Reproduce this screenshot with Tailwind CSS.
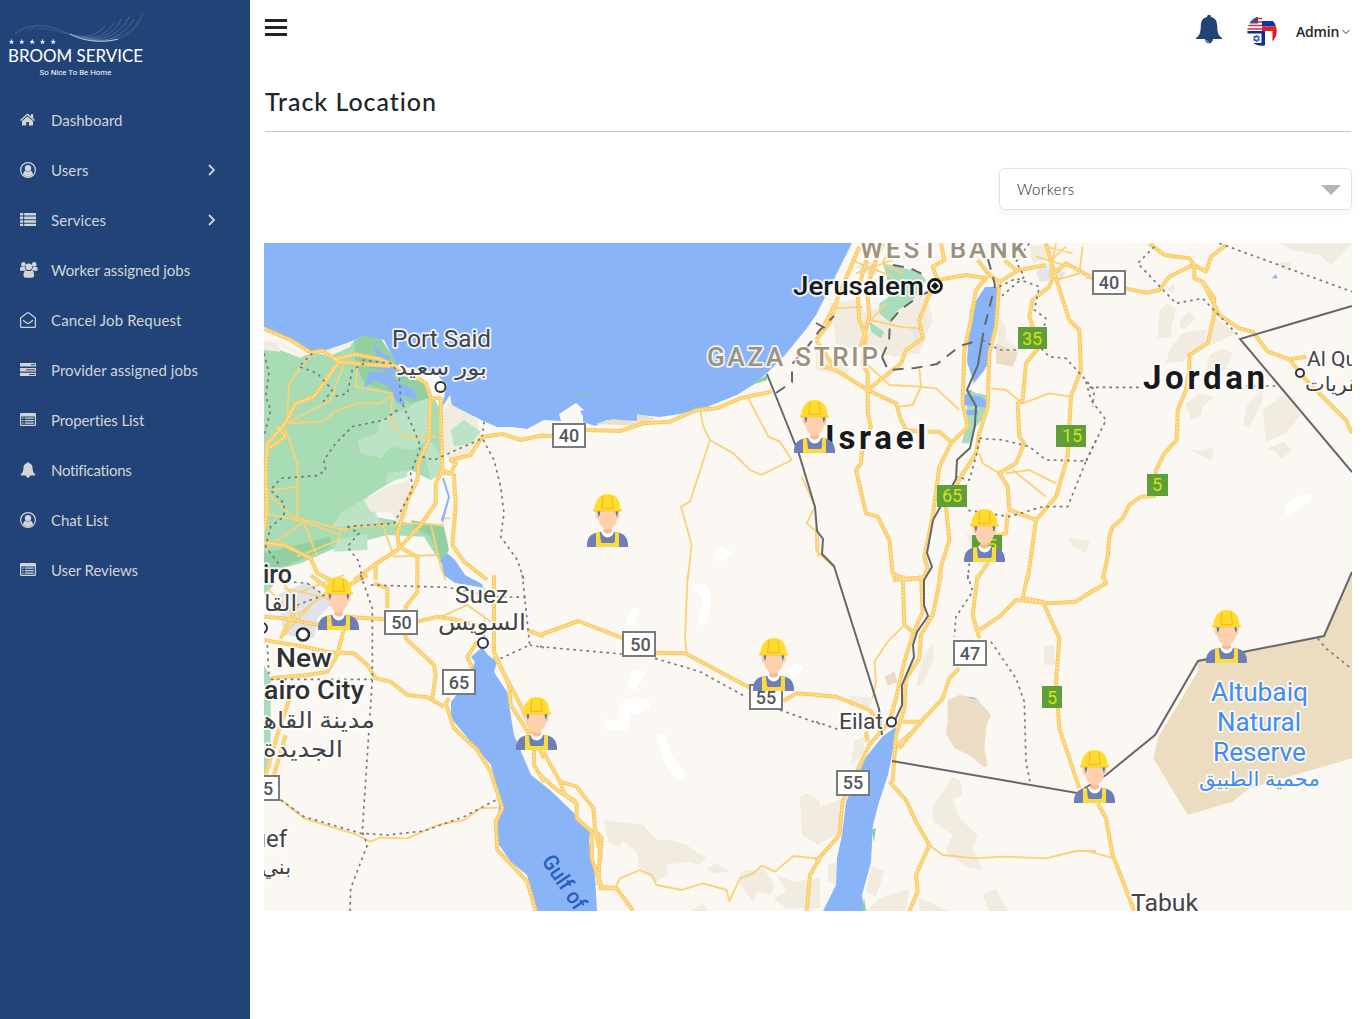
<!DOCTYPE html>
<html lang="en">
<head>
<meta charset="utf-8">
<title>Track Location</title>
<script src="https://cdn.jsdelivr.net/npm/@tailwindcss/browser@4"></script>
</head>
<body class="flex h-[1019px] w-[1366px] overflow-hidden bg-white font-['Lato',sans-serif] text-[#212529]">

<!-- Sidebar -->
<aside class="flex h-full w-[250px] shrink-0 flex-col bg-[#224377] text-[#d3d4d8]">
  <svg class="h-[95px] w-[250px] shrink-0" viewBox="0 0 250 95" fill="none">
    <g stroke="#9db0cf" stroke-width=".6" opacity=".6">
      <path d="M15 34C25 25 42 23 57 29C75 37 100 44 116 40C130 36 139 25 143 13" opacity=".8"/>
      <path d="M28 29C45 26 60 32 76 36C100 44 128 40 139 20" opacity=".5"/>
      <path d="M78 36C96 41 106 34 114 23M82 38C102 42 116 31 121 19M87 39C106 43 124 29 129 17M92 40C113 44 130 28 134 19M74 35C88 39 98 34 105 26"/>
      <path d="M24 28L18 36M34 26L26 35M44 27L33 33" opacity=".3"/>
    </g>
    <path d="M70 34C84 42 104 43 118 39" stroke="#dce4f2" stroke-width=".8"/>
    <g fill="#fff">
      <path id="star" d="M11.500 38.800L12.200 40.900H14.300L12.600 42.100L13.300 44.200L11.500 42.900L9.700 44.200L10.400 42.100L8.700 40.900H10.800Z"/>
      <use href="#star" x="10.300"/><use href="#star" x="20.700"/><use href="#star" x="31"/><use href="#star" x="41.700"/>
    </g>
    <text x="8" y="62" font-size="17.500" textLength="135" lengthAdjust="spacingAndGlyphs" fill="#fff" font-family="Lato">BROOM SERVICE</text>
    <text x="39.500" y="74.500" font-size="8" textLength="72" lengthAdjust="spacingAndGlyphs" fill="#fff" font-family="Roboto">So Nice To Be Home</text>
  </svg>
  <nav class="flex flex-col text-[15px] tracking-[-0.1px]">
    <a class="flex h-[50px] items-center pl-5"><svg class="h-4 w-[17px]" viewBox="0 0 17 16" fill="currentColor"><path d="M7.500 1.400L0 8l.9 1L7.500 3.300 14.200 9l.9-1-2-1.800V2h-2v2.200Z"/><path d="M7.500 4.500L2 9.100V13.500h4.200V10h2.700v3.500H13V9.100Z"/></svg><span class="ml-[14px] pt-px tracking-[0px]">Dashboard</span></a>
    <a class="flex h-[50px] items-center pl-5"><svg class="h-4 w-[17px]" viewBox="0 0 17 16"><g id="person"><circle cx="8" cy="8" r="7.400" fill="none" stroke="currentColor" stroke-width="1.200"/><circle cx="8" cy="6.100" r="3.200" fill="currentColor"/><path d="M3 12.600C3.300 9.800 4.700 8.700 5.500 8.400Q8 10.800 10.500 8.400C12 9 12.800 10.500 13 12.600Q8 17.500 3 12.600Z" fill="currentColor"/></g></svg><span class="ml-[14px] pt-px tracking-[0.1px]">Users</span><svg class="mr-[34px] ml-auto h-3 w-2" viewBox="0 0 8 12" fill="none" stroke="currentColor" stroke-width="1.800"><path d="M1 1L6 6L1 11"/></svg></a>
    <a class="flex h-[50px] items-center pl-5"><svg class="h-4 w-[17px]" viewBox="0 0 17 16" fill="currentColor"><path d="M0 1h3.200v2.600H0ZM4.200 1H16v2.600H4.200ZM0 4.600h3.200v2.600H0ZM4.200 4.600H16v2.600H4.200ZM0 8.200h3.200v2.600H0ZM4.200 8.200H16v2.600H4.200ZM0 11.800h3.200V14H0ZM4.200 11.800H16V14H4.200Z"/></svg><span class="ml-[14px] pt-px tracking-[0.1px]">Services</span><svg class="mr-[34px] ml-auto h-3 w-2" viewBox="0 0 8 12" fill="none" stroke="currentColor" stroke-width="1.800"><path d="M1 1L6 6L1 11"/></svg></a>
    <a class="flex h-[50px] items-center pl-5"><svg class="h-4 w-[17px] overflow-visible" viewBox="0 0 17 16" fill="currentColor"><circle cx="3.400" cy="2.400" r="2.300"/><circle cx="14.200" cy="2.400" r="2.300"/><circle cx="8.800" cy="4.700" r="3.300"/><path d="M0 8.700V6.500Q.2 4.800 1.500 4.700L5 5.200Q4.900 7 6 7.700L4 8.700ZM17.600 8.700V6.500Q17.400 4.800 16.100 4.700L12.600 5.200Q12.700 7 11.600 7.700L13.600 8.700ZM3.500 13.500C3.400 9.900 4.700 8.200 6 8.200Q8.800 10 11.600 8.200C13 8.200 14.200 9.900 14.100 13.500Q14 15.800 12 15.800H5.600Q3.600 15.800 3.500 13.500Z"/></svg><span class="ml-[14px] pt-px tracking-[-0.05px]">Worker assigned jobs</span></a>
    <a class="flex h-[50px] items-center pl-5"><svg class="h-4 w-[17px]" viewBox="0 0 17 16" fill="none" stroke="currentColor" stroke-width="1.200"><path d="M.6 6L7 1Q8 .3 9 1L15.400 6V14.500Q15.400 15.400 14.500 15.400H1.500Q.6 15.400 .6 14.500Z"/><path d="M3 8.200L6.700 11Q8 12 9.300 11L13 8.200"/></svg><span class="ml-[14px] pt-px tracking-[0.15px]">Cancel Job Request</span></a>
    <a class="flex h-[50px] items-center pl-5"><svg class="h-4 w-[17px]" viewBox="0 0 17 16" fill="currentColor"><path fill-rule="evenodd" d="M.5 1h15q.5 0 .5.500v3H0v-3Q0 1 .5 1ZM11 2.200v1h4v-1ZM0 6h16v3.500H0ZM6 7.200v1h9v-1ZM0 10.800h16V14H0ZM9 12v1h6v-1Z"/></svg><span class="ml-[14px] pt-px tracking-[0.03px]">Provider assigned jobs</span></a>
    <a class="flex h-[50px] items-center pl-5"><svg class="h-4 w-[17px]" viewBox="0 0 17 16" fill="currentColor"><path id="listalt" fill-rule="evenodd" d="M1.200 1h13.600Q16 1 16 2.200v10.600Q16 14 14.800 14H1.200Q0 14 0 12.800V2.200Q0 1 1.200 1ZM1.200 4.400v8.400h13.600V4.400ZM2.200 5.500h1.300v1.200H2.200ZM4.700 5.500h9v1.200h-9ZM2.200 8h1.300v1.200H2.200ZM4.700 8h9v1.200h-9ZM2.200 10.500h1.300v1.200H2.200ZM4.700 10.500h9v1.200h-9Z"/></svg><span class="ml-[14px] pt-px">Properties List</span></a>
    <a class="flex h-[50px] items-center pl-5"><svg class="h-4 w-[17px]" viewBox="0 0 17 16" fill="currentColor"><path d="M8 0Q9 0 9 1.200C11.500 1.700 12.600 3.500 12.600 6C12.600 9.500 13.500 11 15.300 12.300Q15.300 13.500 14.200 13.500H10Q9.800 15.700 8 15.700T6 13.500H1.800Q.7 13.500 .7 12.300C2.500 11 3.400 9.500 3.400 6C3.400 3.500 4.500 1.700 7 1.200Q7 0 8 0Z"/></svg><span class="ml-[14px] pt-px tracking-[-0.3px]">Notifications</span></a>
    <a class="flex h-[50px] items-center pl-5"><svg class="h-4 w-[17px]" viewBox="0 0 17 16"><use href="#person"/></svg><span class="ml-[14px] pt-px">Chat List</span></a>
    <a class="flex h-[50px] items-center pl-5"><svg class="h-4 w-[17px]" viewBox="0 0 17 16" fill="currentColor"><use href="#listalt"/></svg><span class="ml-[14px] pt-px">User Reviews</span></a>
  </nav>
</aside>

<main class="flex w-[1116px] flex-col pr-[14px] pl-[14px]">
  <header class="flex h-[62px] shrink-0 items-start justify-between px-px">
    <button class="mt-[19px] flex flex-col gap-1"><span class="h-[3px] w-[22px] bg-[#212529]"></span><span class="h-[3px] w-[22px] bg-[#212529]"></span><span class="h-[3px] w-[22px] bg-[#212529]"></span></button>
    <div class="flex items-start">
      <svg class="mt-[14px] h-[30px] w-[26px]" viewBox="0 0 26 30"><path d="M13 .8Q15 .8 15 3C19.500 4 21 7 21.200 12C21.400 19 22.500 21.500 26 24V25H0V24C3.500 21.500 4.600 19 4.800 12C5 7 6.500 4 11 3Q11 .8 13 .8ZM9 25H17Q16.500 29.200 13 29.200T9 25Z" fill="#224377"/><path d="M10.500 26Q11 28 13 28.200" stroke="#fff" fill="none" stroke-width=".6"/></svg>
      <svg class="mt-4 ml-[25px] h-[30px] w-[30px]" viewBox="0 0 30 30">
        <clipPath id="fc"><circle cx="15" cy="15" r="14.700"/></clipPath>
        <g clip-path="url(#fc)">
          <path d="M0 0H15V15H0Z" fill="#fff"/><path d="M0 2.500H15M0 6H15M0 9.500H15M0 13H15" stroke="#d22f40" stroke-width="1.700"/><path d="M3 0H11V7.500H3Z" fill="#4a4a7c"/>
          <path d="M15 5H30V10.500H15Z" fill="#0a35a8"/><path d="M15 10.500H30V15H15Z" fill="#e02222"/><path d="M25.500 15H30V30H25.500Z" fill="#e8112a"/>
          <path d="M0 15H15V30H0Z" fill="#fff"/><path d="M0 15H18V17.500H0ZM7 27H18V30H7ZM14.500 15H18V30H14.500Z" fill="#0a2f96"/>
          <path d="M9.500 19L12.500 24.200H6.500ZM9.500 26L12.500 20.800H6.500Z" fill="none" stroke="#2440d0"/>
        </g>
      </svg>
      <div class="mt-[22px] ml-[19px] flex items-center gap-[3px] pr-px"><span class="w-[43px] font-['Open_Sans',sans-serif] text-[14px] leading-5 font-semibold tracking-[-0.2px]">Admin</span><svg class="h-2 w-2" viewBox="0 0 8 8" fill="none" stroke="#333"><path d="M.5 2L4 5.500L7.500 2"/></svg></div>
    </div>
  </header>

  <h1 class="mx-px h-[70px] shrink-0 border-b border-[#c6c6c6] pt-5 text-[25px] leading-[38px] font-medium tracking-[0.95px] text-[#212529]">Track Location</h1>

  <div class="mt-9 flex h-[42px] w-[353px] shrink-0 items-center justify-between self-end rounded-md border border-[#e2e2e2] bg-white pr-[10px] pl-[17px] shadow-[0_3px_6px_#0000000d]">
    <span class="text-[15px] font-light tracking-[0.5px]">Workers</span>
    <svg class="mt-px h-[10px] w-5" viewBox="0 0 20 10"><path d="M0 0H20L10 10Z" fill="#b5b5b5"/></svg>
  </div>

  <!-- Map canvas -->
  <svg class="mt-[33px] h-[668px] w-[1088px] shrink-0" viewBox="264 243 1088 668" font-family="Roboto, 'DejaVu Sans', sans-serif">
    <defs>
      <symbol id="worker" viewBox="0 0 123 159">
        <path d="M0 159V151C2 126 15 116 42 113L62 109L82 113C108 116 121 126 123 151V159Z" fill="#6d7fb6"/>
        <path d="M27 115H39L42 142Q42 147 47 147H77Q82 147 83 142L84 115H96V159H27Z" fill="#fbdc3e"/>
        <path d="M43 110Q62 118 81 110L82 115Q76 131 62 131T42 115Z" fill="#fff"/><path d="M50 90H74V114Q62 124 50 114Z" fill="#f9ba91"/>
        <path d="M40 117L43 115Q49 131 62 131T81 115L84 117L83 142Q82 147 77 147H47Q42 147 42 142Z" fill="#6d7fb6"/>
        <path d="M26 51H98V65Q96 77 90 75C88 93 74 107 62 107S36 93 34 75Q28 77 26 65Z" fill="#ffd0ad"/>
        <path d="M31 51H40Q39 64 35 69ZM94 51H85Q87 64 90 69Z" fill="#5779aa"/>
        <path d="M22 45C24 20 35 8 48 2Q62-2 76 2C91 8 100 22 100 45L105 46V52H18V46Z" fill="#ffdc2d"/>
        <path d="M48 7L44 43H79L75 7" fill="none" stroke="#ffad26" stroke-width="3"/><path d="M20 51H103" stroke="#f4c33c" stroke-width="2"/>
      </symbol>

      <!-- Each tile is a 280px-wide sheet drawn at three units per pixel -->
      <g id="major">
        <g transform="translate(264 240) scale(.33333)">
          <path d="M0 266L80 300L140 338L175 332L225 365L290 372L380 378M225 365L150 470L95 490L60 555L10 610L5 700L10 810L0 870M40 560L65 590L15 625M210 358L275 343L350 358L400 382L450 405L485 430L500 470L495 600L465 665L460 720L430 780L400 880L405 920M505 475H530L535 690L515 730V790L470 855L400 930L330 975L270 1020M405 920L460 950V1020M335 975V1020M535 690L570 705L575 800L565 915L600 965L670 1020M535 700H560L575 670L560 660L620 645L655 590L715 582L770 600L840 585M0 908L60 915L140 955L160 1000L200 1020"/>
        </g>
        <g transform="translate(540 240) scale(.33333)">
          <path d="M0 588H40M137 570L240 573L310 550L390 545L470 510L530 505L600 475L695 455"/>
        </g>
        <g transform="translate(816 240) scale(.33333)">
          <path d="M0 300L40 250L70 160L105 80L130 20M25 255L65 180M165 10L140 100L125 160L130 240L150 290L140 370L155 400L155 450M200 10L165 100L155 170L160 230L135 320M375 10L385 60L350 80L365 120L335 175L310 240L320 295L270 330L255 370L155 450L240 490L255 540L270 570L320 575M0 300L60 390L155 450M365 120L450 105L510 115L480 150L465 240L445 330L440 490L455 560L405 610L370 680L350 830L325 950L335 985L320 1020M485 60L520 105L550 125L610 90L690 75M550 125L540 260L520 340L515 500L490 580L480 640L435 710L390 800L400 900L375 980L370 1020M155 450V520L165 560L140 610L135 670L120 690L150 820L185 830L220 900L230 1000L270 1020M565 60L600 90M690 10L715 100L700 140L650 180L640 230L670 320L630 370L620 480L605 490L610 590L625 610L600 670L550 700L575 740L580 810L660 840L720 770L755 650L765 470L795 390L790 270L760 240L715 100L750 70L840 120M575 820L570 880L530 890L515 970L480 1020M660 840L635 1020M230 1020L330 1010M335 575H370L405 605M60 390L20 380"/>
        </g>
        <g transform="translate(1086 240) scale(.33333)">
          <path d="M0 110H18M118 145L180 158L220 150L250 110L320 75M190 10L235 45L310 55L325 75V115L350 125L385 175V220L365 310L310 345V385L300 450L275 510L272 600L235 640L210 690V720M420 15L375 50L360 95L325 75M350 125L400 225L460 265L500 275L545 335L610 358L660 350M610 358L660 420L780 540L798 580M210 767L165 770L130 795L110 835L80 860L70 890L65 950L50 1020"/>
        </g>
        <g transform="translate(264 575) scale(.33333)">
          <path d="M0 125L60 130L160 150L250 125L360 133M460 140L520 125L570 133L680 160M0 195L120 215L200 232L270 235L310 270L335 310L380 320L430 360L490 367L540 395M20 310L130 300L190 290L220 240L240 160M460 0V50L425 95V190L510 270L515 300L505 370M330 25L370 40V100M690 0V230L735 330L740 390L810 500V570L840 620M640 200L610 245L625 280M545 385L570 460L640 525L680 590L715 700L695 740L700 825L790 920L815 1008M5 600L40 480L80 360M30 600L65 480M100 90L50 190M140 0L215 60M255 30L310 0M790 165L840 185M690 240L770 390L840 550M540 395L555 370"/>
        </g>
        <g transform="translate(540 575) scale(.33333)">
          <path d="M0 180L115 138L250 190M345 233L435 235L630 338M730 378L770 355L840 360M10 530L60 620L110 635L160 700L165 760L180 830L175 930M0 600L45 640L110 685V730L155 770L155 850L185 935L230 940L280 1008M175 940H220M60 620L75 660L110 680M840 850L810 900L800 1008M160 760L185 790L180 860"/>
        </g>
        <g transform="translate(816 575) scale(.33333)">
          <path d="M0 360L60 365L160 405L190 440M315 0L320 110L290 180L265 260L240 370L220 440L160 510L80 680L70 780L0 860M375 0L350 120L315 180L310 250L270 310L265 400L240 480L230 620M260 0L265 150L290 170M485 0L470 120L490 190M490 165L550 125L600 75L700 85L780 80L840 40M635 0L620 70L680 80L730 190L720 320L730 460L790 640M430 280L400 310L380 370L315 440H260M230 0L260 15L315 10M315 440L250 520M220 620L270 675L300 740L340 810L300 900L305 950L280 1008M155 500L150 470"/>
        </g>
        <g transform="translate(1086 575) scale(.33333)">
          <path d="M0 60L60 25L50 0M35 685L60 730L80 840L145 1008"/>
        </g>
      </g>
      <g id="minor">
        <g transform="translate(264 240) scale(.33333)">
          <path d="M140 345L105 390L75 430L70 530M60 555L100 670V830M0 820L120 845L230 885M120 845L0 930M0 750L85 830L240 870L280 860L440 850L540 855M240 370L200 480L70 550L180 545L210 515L280 490H350L385 465M280 380L275 440L385 460L380 550L420 590H520M10 610L0 900M25 750L100 740M350 840L390 950L525 945M500 850L530 980L545 1020M230 870L225 900L100 950M120 850L160 950M540 835H560"/>
        </g>
        <g transform="translate(540 240) scale(.33333)"><path d="M480 510L490 560L510 600L580 640L630 690L665 705L755 660L720 605L685 590L625 475M510 600L450 785L423 800L455 915L443 1020M785 710L825 800L800 850L835 880V950"/></g>
        <g transform="translate(816 240) scale(.33333)"><path d="M165 240L250 260L310 265M60 205L140 200M150 370L220 435L310 440L360 445L430 510M310 385L315 440L290 495L250 500M525 445L570 450L620 490L700 460L765 470M570 700L640 690L720 730M590 690L690 770M490 640L500 670L550 700M690 20L770 40M700 65L750 20M230 10L200 70L260 100M105 60L230 110M120 100L230 60M720 10L700 110M660 50L760 80M800 20L790 100L720 120M0 860V930L50 980M210 190L165 240"/></g>
        <g transform="translate(264 575) scale(.33333)"><path d="M45 670L120 730L280 780L318 800L350 788L430 790L520 750L600 735L650 700L700 698M100 80L40 0M60 40L240 80M100 120L180 60M520 130L610 90L680 140M10 40L100 130M110 50L240 0M150 80L60 180"/></g>
        <g transform="translate(540 575) scale(.33333)"><path d="M443 0L435 190L440 235M225 940L240 910L300 885L335 900L350 930L425 945L490 925L560 945L568 978L600 910L640 895L665 872L705 890L760 843L830 850"/></g>
        <g transform="translate(816 575) scale(.33333)"><path d="M260 155L215 200L175 260L180 320L170 370M320 440L250 500L240 530M340 810L380 840L480 850L560 845L690 850L780 828H840"/></g>
        <g transform="translate(1086 575) scale(.33333)"><path d="M0 827L85 850"/></g>
      </g>
    </defs>

    <path d="M264 243H1352V911H264Z" fill="#fbf8f3"/>

    <!-- Farmland, sand and reserves -->
    <g transform="translate(264 240) scale(.33333)">
      <path d="M0 310L100 350L180 335L270 305L300 285L345 290L400 380L480 430L525 500L530 690L500 720L440 690L400 715L310 770L330 830L440 850L520 880L550 960L530 970L480 890L370 885L290 905L200 930L110 970L0 1000Z" fill="#a7dcb5"/>
      <path d="M345 540L420 510L470 480L500 470L490 600L450 630L380 620L350 655L290 640L280 600L340 580ZM430 690L370 700L365 730L430 710ZM310 770L230 820L200 865L350 850ZM490 590L525 640L535 700L500 720L490 680L480 630ZM220 900L310 880V930L210 935Z" fill="#bce3c5"/>
      <path d="M270 305L300 283L350 295L400 370L480 430L495 475L440 490L385 460L300 430L275 370ZM440 840L540 860L555 930L530 970L500 890L450 860ZM0 940L200 890V920L70 975L0 990Z" fill="#92d0a2"/>
      <path d="M325 310L350 335L375 350L370 370L340 350ZM315 395L375 400L410 430L450 450L460 480L410 465L425 495L400 490L375 440L330 420L300 445ZM310 370L400 380L420 420L380 400L315 380Z" fill="#8ab4f8"/>
      <path d="M0 300L40 310L50 335L0 330ZM540 520L560 470L640 540L650 590L620 640L555 655L540 640ZM300 780L370 740L440 720L430 830L400 850L380 815L320 815Z" fill="#f2ece0"/>
      <path d="M560 570L600 540L650 575L620 610L570 620Z" fill="#bce3c5"/>
    </g>
    <g transform="translate(816 240) scale(.33333)" fill="#f2ece0">
      <path d="M0 230L60 110L80 10H0ZM40 190L120 180L150 215L330 150L350 240L310 340L230 350L140 310L120 330L60 310ZM0 330L100 380L90 410L0 390ZM550 230L570 260V300L610 330L590 380L540 370ZM640 20L700 10V50L650 70ZM755 890L820 905L810 940L770 920ZM450 880L475 890L465 930Z"/>
      <path d="M660 90L700 70L750 100L730 120L670 125ZM280 260L320 270L300 300ZM120 80L160 65L190 90L170 110Z" fill="#e3e6ea"/>
      <path d="M190 190L220 170L210 100L200 70L310 95L330 120L290 180L240 215L225 250L190 220ZM160 245L205 275L195 295L165 275ZM450 450L510 465L515 520L480 560L460 610H437L455 540Z" fill="#a9dcba"/>
      <path d="M540 310L605 340L590 380L540 370Z" fill="#ecdcc4"/>
    </g>
    <g transform="translate(1086 240) scale(.33333)" fill="#f2ece0">
      <path d="M220 210L245 190L270 205L255 270L260 290L215 295ZM285 235L310 215L328 235L300 265H280ZM385 230L450 280L370 318L370 270ZM250 330L290 280L360 268L355 310L310 340L290 365L240 370ZM370 345L410 325L440 340L420 390L360 395ZM300 490L340 460L385 470L350 500L345 525L315 540ZM485 490L530 450V480L490 565L472 555ZM530 510L600 460L645 525L600 580L540 605ZM545 625L595 605L618 630L585 658L575 640ZM308 628L345 632L382 620L378 662ZM580 10H798L735 75L700 45L620 30ZM570 70L615 65L610 100ZM240 150L265 130V160ZM0 900L12 905L0 930Z"/>
      <path d="M595 805Q620 765 675 760L676 785Q640 795 610 828Q597 825 595 805Z" fill="#fff"/><path d="M557 115L570 102L575 115Z" fill="#8ab4f8"/>
    </g>
    <g transform="translate(540 575) scale(.33333)" fill="#f2ece0">
      <path d="M190 735L270 745L310 750L350 795H390L440 810L500 850L480 870L440 860L380 870L385 900L350 920L300 890L290 830L250 800L240 820L205 800ZM500 880L530 865L570 890L510 895ZM600 890L670 880L705 930L690 960L650 950L640 980L600 930ZM710 900L760 920L840 910V1000L740 1000L700 970L740 950ZM780 665L800 655L840 680V810L785 780ZM450 1008L490 988L505 1008Z"/>
      <path d="M260 150Q262 110 280 100Q297 100 295 115L285 150ZM260 340L275 295Q295 275 318 295L285 345ZM190 430L230 440L245 385Q255 365 300 370Q332 370 330 390Q325 415 270 415L265 465L200 465ZM350 485Q360 470 375 480L395 540L435 600Q435 620 415 618Q370 580 350 485ZM460 35Q500 10 515 60L500 145Q480 160 475 130L490 80ZM745 290L770 265L790 280L760 310Z" fill="#fff"/>
    </g>
    <g transform="translate(540 240) scale(.33333)"><path d="M520 940L545 918L580 940L545 965L525 960Z" fill="#fff"/></g>
    <g transform="translate(816 575) scale(.33333)" fill="#f2ece0">
      <path d="M350 690L380 650L410 605L435 620L440 660L410 670L430 730L485 780L470 820L500 885L450 875L390 830L410 780L350 740ZM330 230L350 205L355 250L320 330L300 335L315 270ZM100 360L170 370L160 400L100 390ZM685 215L715 210V270L685 270ZM0 700L80 670V770L0 810ZM165 870L205 890L180 965L150 950ZM190 970L280 940L270 1008H150ZM310 970L400 1008H310ZM500 960L540 940L575 1008H520ZM35 870L60 860V930L35 920ZM115 500L150 480L140 540L105 570Z"/>
      <path d="M395 375L430 360L480 368L525 420L512 450L505 520L515 570L505 577L460 540L415 520L390 475L395 440ZM205 305L235 290L245 320L215 333Z" fill="#ecdcc4"/><path d="M455 367L485 375L470 366Z" fill="#85cfc8"/>
    </g>
    <g transform="translate(1086 575) scale(.33333)"><path d="M335 260L715 183L798 0V550L490 640L440 680L305 720L202 550L215 490L335 290Z" fill="#ecdcc0"/></g>
    <g transform="translate(264 575) scale(.33333)"><path d="M40 60L130 20L180 60L210 80L160 130L150 190L60 180Z" fill="#dfe3ea"/><path d="M0 10L30 30L0 60ZM0 270L20 310V560L0 610Z" fill="#a9dcba"/></g>

    <!-- Water -->
    <g fill="#8ab4f8">
      <path d="M264 243H852L816 315L807 328L785 355L767 373L753 385L737 395L707 407L680 414L660 417L640 415V421L607 420L595 426L583 422V416L580 411L584 410L576 403L559 414L561 421L544 420L527 429L512 427H497L481 420L452 405L450 395L441 409L447 385L436 374L397 365L384 340L364 335L354 341L326 350L311 353L264 327Z"/>
      <path d="M482 647L471 657L475 662L464 685L451 702V718L471 742L491 765L499 802L497 842L511 862L527 875L537 911H597L595 875L589 842L590 832L573 812L550 790L531 775L514 735L507 692L494 672L497 662L488 655Z"/>
      <path d="M896 727L883 736L866 757L846 802L842 835L837 858L836 885L823 911H864L862 895L871 862L873 825L879 802L888 775L892 755Z"/>
      <path d="M985 287H998L995 325L988 374L975 386L967 362L970 310ZM965 398L975 380L982 371L975 388ZM963 405V394L980 396L989 403V408ZM966 410H978V415H967ZM441 560L447 553L455 560L465 575L482 584L486 594L483 644H485V588L455 583L444 575ZM441 520L448 497L442 478L444 478L450 497L443 523Z"/>
    </g>
    <path d="M983 372L989 362L987 376L978 394L969 389Z" fill="#fdfbf8"/>
    <path d="M559 405L580 393H603L578 395ZM751 385L768 374L767 380ZM872 830L876 828L874 842ZM864 898L866 911H862Z" fill="#86cf9e"/>
    <path d="M595 424L613 419L637 422V414L656 418L640 426Z" fill="#eadfcb"/>
    <path d="M311 352L326 352L354 340L350 347L330 356ZM267 338L282 343L300 352L311 352L300 358Z" fill="#f7f2e9"/>

    <!-- Roads -->
    <g fill="none" stroke-linejoin="round">
      <use href="#minor" stroke="#fcd078" stroke-width="5.500"/>
      <use href="#major" stroke="#fbcb63" stroke-width="12"/>
      <use href="#major" stroke="#fee3a0" stroke-width="5" stroke-dasharray="6 4"/>
    </g>

    <!-- Regional boundaries -->
    <g fill="none" stroke="#77787c" stroke-width="5" stroke-dasharray="8 12">
      <path transform="translate(264 240) scale(.33333)" d="M0 340L15 400L5 470L20 510L0 590M145 340L105 380L160 400L205 450L170 495M300 370L265 390L250 460L210 470M295 360L380 370L405 400L410 480L450 570L470 620L440 700L445 750L390 850L245 860M400 510L360 540L265 560L215 610L180 660L185 690L160 707L50 715L20 750L60 790V830L20 860L5 920L50 980M250 860L285 880L250 920L285 965L295 1020M475 650L510 660L655 595L690 660L710 740L720 820L710 890L760 960L780 1020M660 545L655 590"/>
      <path transform="translate(816 240) scale(.33333)" d="M640 10L600 65L625 110L555 170M550 140L600 115L670 140L655 210L690 235L670 320L700 350L750 355L800 410L835 450L830 500M500 300L550 330H600M490 595L560 600L640 620L690 660L810 663L755 800H680L580 830L450 810M840 600L810 663M490 600L480 650L460 720L420 710M460 970L455 1020"/>
      <path transform="translate(1086 240) scale(.33333)" d="M205 20L155 70L270 190L350 175L460 290M400 10L798 155M0 425L15 480L60 540L0 665M10 442H170M480 438H580"/>
      <path transform="translate(264 575) scale(.33333)" d="M70 20L130 25L180 60L100 90M320 30L550 37L690 65L790 67M290 0L325 100V310L295 770L310 810L260 940L258 1008M50 675L120 725L290 775L370 780L480 768L600 725L705 670M20 313H325M775 0L797 210L700 255M797 210L840 218M10 210L15 310"/>
      <path transform="translate(540 575) scale(.33333)" d="M0 215L110 225L245 237M345 250L480 290L620 367M720 405L840 447"/>
      <path transform="translate(816 575) scale(.33333)" d="M0 440L70 465L160 440M455 0L470 50L420 125L415 185M525 200L600 310L625 380L630 560L642 620"/>
      <path transform="translate(1086 575) scale(.33333)" d="M695 190L720 220L798 282"/>
    </g>
    <!-- Borders -->
    <g fill="none" stroke="#65676b" stroke-width="2">
      <path d="M767 374L799 454L815 507L817 531L823 539L822 554L834 566L879 709L882 735M982 340L978 365L967 390L976 406L975 425L970 448L957 460L956 479L947 495L933 520L927 553L932 567L924 580V605L928 616L917 632L913 645L914 657L902 685V705L893 725M892 761L1077 793L1106 775L1155 735L1198 661L1324 636L1352 572M1352 306L1240 339L1352 472"/>
      <path d="M776 393L792 382L792 364L805 350L820 330L834 316M816 323L825 328M988 259L995 285L985 325L982 340M882 357L888 370L915 368L937 364L960 346L980 340M882 357L889 341L890 322L900 310L918 297L928 292M893 265L910 268L928 277" stroke-dasharray="11 8"/>
    </g>

    <!-- Road shields -->
    <g fill="#fff" stroke="#7a7b7d" stroke-width="2">
      <path d="M553 424h32v23h-32ZM1093 271h32v23h-32ZM385 611h32v23h-32ZM623 632h32v24h-32ZM750 685h32v24h-32ZM443 670h32v24h-32ZM954 641h32v24h-32ZM837 771h32v24h-32ZM247 776h32v24h-32Z"/>
    </g>
    <path d="M1018 327h29v22h-29ZM1056 425h30v22h-30ZM937 485h30v22h-30ZM972 535h30v22h-30ZM1147 474h21v22h-21ZM1042 686h20v22h-20Z" fill="#609e3a"/>
    <g font-size="18" font-weight="500" fill="#55575a" text-anchor="middle">
      <text x="569" y="442">40</text><text x="1109" y="289">40</text><text x="401.500" y="629">50</text><text x="640.500" y="651">50</text><text x="766" y="704">55</text><text x="459" y="689">65</text><text x="970" y="660">47</text><text x="853" y="789">55</text><text x="268" y="795">5</text>
    </g>
    <g font-size="18" fill="#d2e213" text-anchor="middle">
      <text x="1032" y="345">35</text><text x="1072" y="442">15</text><text x="952" y="502">65</text><text x="987" y="552">45</text><text x="1157" y="491">5</text><text x="1052" y="704">5</text>
    </g>

    <!-- Place names -->
    <g stroke="#fff" stroke-opacity=".85" stroke-width="3.500" stroke-linejoin="round" paint-order="stroke">
      <g fill="#9c917c" font-size="26" font-weight="500">
        <text x="860" y="258" textLength="167">WEST BANK</text>
        <text x="707" y="366" textLength="171">GAZA STRIP</text>
      </g>
      <g fill="#18191b">
        <text x="793" y="295" font-size="26" font-weight="500" textLength="131" lengthAdjust="spacingAndGlyphs">Jerusalem</text>
        <text x="1143" y="389" font-size="33" font-weight="700" textLength="122">Jordan</text>
        <text x="825" y="449" font-size="33" font-weight="700" textLength="101">Israel</text>
      </g>
      <g fill="#424447" font-size="24">
        <text x="392" y="347" textLength="99" lengthAdjust="spacingAndGlyphs">Port Said</text>
        <text x="396" y="375" font-size="21" textLength="91" lengthAdjust="spacingAndGlyphs">بور سعيد</text>
        <text x="1307" y="366" font-size="21">Al Qurayyat</text>
        <text x="1305" y="391" font-size="20" textLength="66" lengthAdjust="spacingAndGlyphs">القريات</text>
        <text x="455" y="603" textLength="53" lengthAdjust="spacingAndGlyphs">Suez</text>
        <text x="438" y="630" font-size="22" textLength="88" lengthAdjust="spacingAndGlyphs">السويس</text>
        <text x="839" y="729" font-size="22" textLength="44" lengthAdjust="spacingAndGlyphs">Eilat</text>
        <text x="1131" y="911" textLength="67" lengthAdjust="spacingAndGlyphs">Tabuk</text>
        <text x="287" y="847" text-anchor="end">Beni Suef</text>
        <text x="291" y="874" font-size="21" text-anchor="end">بني</text>
        <text x="226" y="611" font-size="23" textLength="71" lengthAdjust="spacingAndGlyphs">القاهرة</text>
        <text x="236" y="728" font-size="23" textLength="139" lengthAdjust="spacingAndGlyphs">مدينة القاهرة</text>
        <text x="263" y="757" font-size="23" textLength="80" lengthAdjust="spacingAndGlyphs">الجديدة</text>
      </g>
      <g fill="#2f3134" font-size="25" font-weight="500">
        <text x="292" y="583" text-anchor="end">Cairo</text>
        <text x="276" y="667" textLength="56" lengthAdjust="spacingAndGlyphs">New</text>
        <text x="364" y="699" text-anchor="end" textLength="118" lengthAdjust="spacingAndGlyphs">Cairo City</text>
      </g>
      <g fill="#3f8cf4" font-size="25">
        <text x="1211" y="701" textLength="97" lengthAdjust="spacingAndGlyphs">Altubaiq</text>
        <text x="1217" y="731" textLength="84" lengthAdjust="spacingAndGlyphs">Natural</text>
        <text x="1213" y="761" textLength="93" lengthAdjust="spacingAndGlyphs">Reserve</text>
        <text x="1199" y="786" font-size="20" textLength="121" lengthAdjust="spacingAndGlyphs">محمية الطبيق</text>
      </g>
    </g>
    <text transform="translate(541 861) rotate(56)" font-size="22" font-weight="500" textLength="61" lengthAdjust="spacingAndGlyphs" fill="#2860bc">Gulf of</text>
    <g fill="#fff" stroke="#303235" stroke-width="2">
      <circle cx="440.500" cy="387" r="5"/><circle cx="1300" cy="373" r="4"/><circle cx="303" cy="634.500" r="6" stroke-width="2.500"/><circle cx="483" cy="643" r="5"/><circle cx="891.500" cy="722" r="4.500"/><circle cx="262" cy="628" r="5"/>
      <circle cx="935" cy="286" r="6.500" stroke="#16171a" stroke-width="2.800"/><path d="M935 282L939 286L935 290L931 286Z" fill="#16171a" stroke="none"/>
    </g>

    <!-- Worker pins -->
    <g>
      <use href="#worker" x="794" y="400" width="41" height="53"/><use href="#worker" x="587" y="494" width="41" height="53"/><use href="#worker" x="964" y="509" width="41" height="53"/><use href="#worker" x="318" y="577" width="41" height="53"/><use href="#worker" x="753" y="638" width="41" height="53"/><use href="#worker" x="516" y="697" width="41" height="53"/><use href="#worker" x="1206" y="610" width="41" height="53"/><use href="#worker" x="1074" y="750" width="41" height="53"/>
    </g>
  </svg>
</main>
</body>
</html>
